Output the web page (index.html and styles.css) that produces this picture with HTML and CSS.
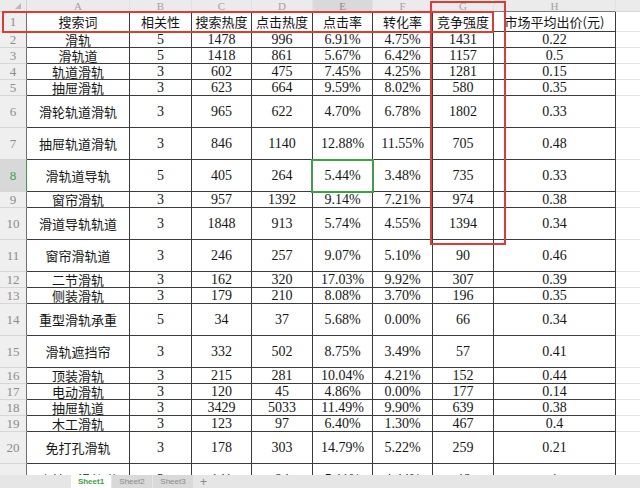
FILE: index.html
```html
<!DOCTYPE html>
<html lang="zh-CN">
<head>
<meta charset="utf-8">
<title>滑轨关键词</title>
<link rel="stylesheet" href="styles.css">
</head>
<body>
<div class="sheet">
  <div class="grid-wrap">
    <table class="grid">
      <colgroup>
        <col class="w-rh"><col class="w-a"><col class="w-b"><col class="w-c"><col class="w-d"><col class="w-e"><col class="w-f"><col class="w-g"><col class="w-h"><col class="w-x">
      </colgroup>
      <tr class="h12">
        <td class="corner"><svg class="tri" width="6" height="6" viewBox="0 0 6 6"><polygon points="6,0 6,6 0,6" fill="#b8b8b8"/></svg></td>
        <td class="ch">A</td><td class="ch">B</td><td class="ch">C</td><td class="ch">D</td><td class="ch ch-hl">E</td><td class="ch">F</td><td class="ch">G</td><td class="ch">H</td><td class="ch ch-x"></td>
      </tr>
      <tr class="h20"><td class="rh">1</td><td>搜索词</td><td>相关性</td><td>搜索热度</td><td>点击热度</td><td>点击率</td><td>转化率</td><td>竞争强度</td><td>市场平均出价(元)</td><td class="x"></td></tr>
      <tr class="h16"><td class="rh">2</td><td>滑轨</td><td class="n">5</td><td class="n">1478</td><td class="n">996</td><td class="n">6.91%</td><td class="n">4.75%</td><td class="n">1431</td><td class="n">0.22</td><td class="x"></td></tr>
      <tr class="h16"><td class="rh">3</td><td>滑轨道</td><td class="n">5</td><td class="n">1418</td><td class="n">861</td><td class="n">5.67%</td><td class="n">6.42%</td><td class="n">1157</td><td class="n">0.5</td><td class="x"></td></tr>
      <tr class="h16"><td class="rh">4</td><td>轨道滑轨</td><td class="n">3</td><td class="n">602</td><td class="n">475</td><td class="n">7.45%</td><td class="n">4.25%</td><td class="n">1281</td><td class="n">0.15</td><td class="x"></td></tr>
      <tr class="h16"><td class="rh">5</td><td>抽屉滑轨</td><td class="n">3</td><td class="n">623</td><td class="n">664</td><td class="n">9.59%</td><td class="n">8.02%</td><td class="n">580</td><td class="n">0.35</td><td class="x"></td></tr>
      <tr class="h32"><td class="rh">6</td><td>滑轮轨道滑轨</td><td class="n">3</td><td class="n">965</td><td class="n">622</td><td class="n">4.70%</td><td class="n">6.78%</td><td class="n">1802</td><td class="n">0.33</td><td class="x"></td></tr>
      <tr class="h32"><td class="rh">7</td><td>抽屉轨道滑轨</td><td class="n">3</td><td class="n">846</td><td class="n">1140</td><td class="n">12.88%</td><td class="n">11.55%</td><td class="n">705</td><td class="n">0.48</td><td class="x"></td></tr>
      <tr class="h32"><td class="rh rh-hl">8</td><td>滑轨道导轨</td><td class="n">5</td><td class="n">405</td><td class="n">264</td><td class="n">5.44%</td><td class="n">3.48%</td><td class="n">735</td><td class="n">0.33</td><td class="x"></td></tr>
      <tr class="h16"><td class="rh">9</td><td>窗帘滑轨</td><td class="n">3</td><td class="n">957</td><td class="n">1392</td><td class="n">9.14%</td><td class="n">7.21%</td><td class="n">974</td><td class="n">0.38</td><td class="x"></td></tr>
      <tr class="h32"><td class="rh">10</td><td>滑道导轨轨道</td><td class="n">3</td><td class="n">1848</td><td class="n">913</td><td class="n">5.74%</td><td class="n">4.55%</td><td class="n">1394</td><td class="n">0.34</td><td class="x"></td></tr>
      <tr class="h32"><td class="rh">11</td><td>窗帘滑轨道</td><td class="n">3</td><td class="n">246</td><td class="n">257</td><td class="n">9.07%</td><td class="n">5.10%</td><td class="n">90</td><td class="n">0.46</td><td class="x"></td></tr>
      <tr class="h16"><td class="rh">12</td><td>二节滑轨</td><td class="n">3</td><td class="n">162</td><td class="n">320</td><td class="n">17.03%</td><td class="n">9.92%</td><td class="n">307</td><td class="n">0.39</td><td class="x"></td></tr>
      <tr class="h16"><td class="rh">13</td><td>侧装滑轨</td><td class="n">3</td><td class="n">179</td><td class="n">210</td><td class="n">8.08%</td><td class="n">3.70%</td><td class="n">196</td><td class="n">0.35</td><td class="x"></td></tr>
      <tr class="h32"><td class="rh">14</td><td>重型滑轨承重</td><td class="n">5</td><td class="n">34</td><td class="n">37</td><td class="n">5.68%</td><td class="n">0.00%</td><td class="n">66</td><td class="n">0.34</td><td class="x"></td></tr>
      <tr class="h32"><td class="rh">15</td><td>滑轨遮挡帘</td><td class="n">3</td><td class="n">332</td><td class="n">502</td><td class="n">8.75%</td><td class="n">3.49%</td><td class="n">57</td><td class="n">0.41</td><td class="x"></td></tr>
      <tr class="h16"><td class="rh">16</td><td>顶装滑轨</td><td class="n">3</td><td class="n">215</td><td class="n">281</td><td class="n">10.04%</td><td class="n">4.21%</td><td class="n">152</td><td class="n">0.44</td><td class="x"></td></tr>
      <tr class="h16"><td class="rh">17</td><td>电动滑轨</td><td class="n">3</td><td class="n">120</td><td class="n">45</td><td class="n">4.86%</td><td class="n">0.00%</td><td class="n">177</td><td class="n">0.14</td><td class="x"></td></tr>
      <tr class="h16"><td class="rh">18</td><td>抽屉轨道</td><td class="n">3</td><td class="n">3429</td><td class="n">5033</td><td class="n">11.49%</td><td class="n">9.90%</td><td class="n">639</td><td class="n">0.38</td><td class="x"></td></tr>
      <tr class="h16"><td class="rh">19</td><td>木工滑轨</td><td class="n">3</td><td class="n">123</td><td class="n">97</td><td class="n">6.40%</td><td class="n">1.30%</td><td class="n">467</td><td class="n">0.4</td><td class="x"></td></tr>
      <tr class="h32"><td class="rh">20</td><td>免打孔滑轨</td><td class="n">3</td><td class="n">178</td><td class="n">303</td><td class="n">14.79%</td><td class="n">5.22%</td><td class="n">259</td><td class="n">0.21</td><td class="x"></td></tr>
      <tr class="h32"><td class="rh">21</td><td>木抽屉滑轨道</td><td class="n">3</td><td class="n">141</td><td class="n">94</td><td class="n">5.11%</td><td class="n">4.44%</td><td class="n">46</td><td class="n">1</td><td class="x"></td></tr>
    </table>
  </div>
  <div class="tabs">
    <span class="tab tab-active">Sheet1</span>
    <span class="tab">Sheet2</span>
    <span class="tab">Sheet3</span>
    <span class="tab-add">+</span>
  </div>
  <div class="mark mark-row"></div>
  <div class="mark mark-col"></div>
  <div class="sel"></div>
</div>
</body>
</html>
```

FILE: styles.css
```css
* { box-sizing: border-box; }
html, body { margin: 0; padding: 0; }
body {
  width: 640px;
  height: 488px;
  overflow: hidden;
  background: #ffffff;
  font-family: "Noto Sans CJK SC", sans-serif;
}
.sheet {
  position: relative;
  width: 640px;
  height: 488px;
  display: flex;
  flex-direction: column;
}
.grid-wrap {
  height: 475px;
  overflow: hidden;
  flex: none;
}
.grid {
  border-collapse: separate;
  border-spacing: 0;
  table-layout: fixed;
  width: 640px;
}
.w-rh { width: 27px; }
.w-a { width: 103px; }
.w-b { width: 62px; }
.w-c { width: 60px; }
.w-d { width: 61px; }
.w-e { width: 60px; }
.w-f { width: 60px; }
.w-g { width: 61px; }
.w-h { width: 122px; }
.w-x { width: 24px; }

.h12 { height: 12px; }
.h16 { height: 16px; }
.h20 { height: 20px; }
.h32 { height: 32px; }

.grid td {
  padding: 0;
  text-align: center;
  vertical-align: middle;
  white-space: nowrap;
  font-size: 13px;
  line-height: 15px;
  color: #161616;
  border-right: 1px solid #3c3c3c;
  border-bottom: 1px solid #3c3c3c;
}
.grid td.n {
  font-family: "Liberation Serif", "Noto Sans CJK SC", serif;
  font-size: 14px;
}
.grid td.ch {
  background: #ebebeb;
  color: #a2a2a2;
  font-family: "Liberation Serif", serif;
  font-size: 11px;
  line-height: 10px;
  vertical-align: bottom;
  border-right: 1px solid #e2e2e2;
  border-bottom: 1px solid #7a7a7a;
}
.grid td.ch-hl {
  background: #d9d9d9;
  color: #8a8a8a;
  border-bottom: 1px solid #3f9e47;
}
.grid td.ch-x {
  border-right: none;
  border-bottom: 1px solid #d8d8d8;
}
.grid td.corner {
  background: #ebebeb;
  border-right: 1px solid #d0d0d0;
  border-bottom: 1px solid #c4c4c4;
  text-align: right;
  vertical-align: bottom;
  line-height: 0;
}
.tri {
  margin: 0 5px 2px 0;
}
.grid td.rh {
  background: #efefef;
  color: #8c8c8c;
  font-family: "Liberation Serif", serif;
  font-size: 13px;
  border-right: 1px solid #6e6e6e;
  border-bottom: 1px solid #d6d6d6;
}
.grid td.rh-hl {
  background: #d8d8d8;
  color: #3f9e47;
  border-right: 1px solid #3f9e47;
}
.grid td.x {
  border-right: none;
  border-bottom: 1px solid #e4e4e4;
}

.tabs {
  flex: none;
  height: 13px;
  background: #e6e6e6;
  display: flex;
  align-items: stretch;
  padding-left: 71px;
  font-family: "Liberation Sans", sans-serif;
  font-size: 8px;
  position: relative;
  z-index: 1;
}
.tab {
  width: 40px;
  margin-right: 1px;
  display: flex;
  align-items: center;
  justify-content: center;
  background: #d9d9d9;
  color: #8a8a8a;
}
.tab-active {
  background: #ffffff;
  color: #3f9e47;
  font-weight: bold;
}
.tab-add {
  margin-left: 6px;
  display: flex;
  align-items: center;
  color: #888888;
  font-size: 12px;
}

.mark {
  position: absolute;
  border: 2px solid #de3b36;
  pointer-events: none;
}
.mark-row {
  left: 2px;
  top: 11px;
  width: 492px;
  height: 22px;
}
.mark-col {
  left: 430px;
  top: 1px;
  width: 76px;
  height: 244px;
}
.sel {
  position: absolute;
  left: 311px;
  top: 159px;
  width: 63px;
  height: 34px;
  border: 2px solid #3f9e47;
  pointer-events: none;
}
```
